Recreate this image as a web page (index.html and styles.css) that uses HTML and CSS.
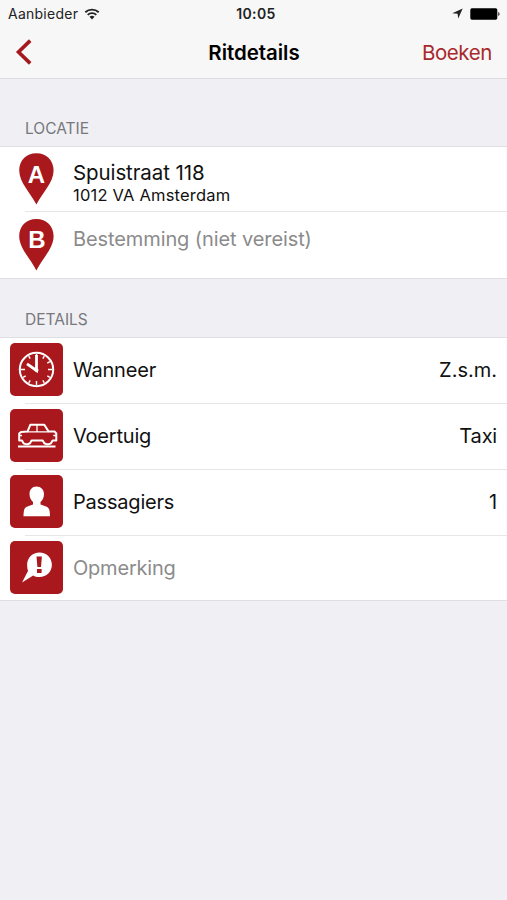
FILE: index.html
```html
<!DOCTYPE html>
<html lang="nl">
<head>
<meta charset="utf-8">
<title>Ritdetails</title>
<link rel="stylesheet" href="styles.css">
</head>
<body>
<header class="top">
  <div class="status">
    <div class="carrier"><span>Aanbieder</span>
      <svg class="wifi" width="16" height="12" viewBox="0 0 16 12"><path d="M1.3 4.3a9.6 9.6 0 0 1 13.4 0M3.7 6.9a6.2 6.2 0 0 1 8.6 0" fill="none" stroke="#222" stroke-width="1.9"/><path d="M5.5 8.8a3.7 3.7 0 0 1 5 0L8 11.4z" fill="#222"/></svg>
    </div>
    <time class="clock">10:05</time>
    <div class="indicators">
      <svg width="11" height="11" viewBox="0 0 11 11"><path d="M10.700.5 6.200 10.500 5.600 5.700.3 5.200z" fill="#222"/></svg>
      <svg width="30" height="12" viewBox="0 0 30 12"><rect x=".3" y=".3" width="27" height="11.4" rx="1.6" fill="#000"/><path d="M28.2 4v4q1.4-.5 1.4-2t-1.4-2z" fill="#333"/></svg>
    </div>
  </div>
  <nav class="nav">
    <svg class="back" width="18" height="26" viewBox="0 0 18 26"><path d="M15.2 1.600 3.500 13l11.700 11.400" fill="none" stroke="#a3191d" stroke-width="3.6"/></svg>
    <h1>Ritdetails</h1>
    <a class="book">Boeken</a>
  </nav>
</header>
<main>
  <h2 class="first">LOCATIE</h2>
  <section class="list">
    <div class="row origin">
      <svg class="pin" width="36" height="53" viewBox="-.4 .4 36 53"><path d="M18 .7C8 .7.8 8 .8 17.6.8 30 12 40 18 52 24 40 35.200 30 35.200 17.600 35.200 8 28 .7 18 .7z" fill="#a9181c"/><text x="18" y="30" text-anchor="middle">A</text></svg>
      <div class="address"><span class="street">Spuistraat 118</span><span class="city">1012 VA Amsterdam</span></div>
    </div>
    <div class="row destination">
      <svg class="pin" width="36" height="53" viewBox="-.4 -.4 36 53"><path d="M18 .7C8 .7.8 8 .8 17.6.8 30 12 40 18 52 24 40 35.200 30 35.200 17.600 35.200 8 28 .7 18 .7z" fill="#a9181c"/><text x="18.500" y="29.500" text-anchor="middle">B</text></svg>
      <span class="label muted dest">Bestemming (niet vereist)</span>
    </div>
  </section>
  <h2>DETAILS</h2>
  <section class="list">
    <div class="row when">
      <svg class="tile" width="53" height="53" viewBox="0 0 53 53"><rect width="53" height="53" rx="5" fill="#a9181c"/><g fill="none" stroke="#fff"><circle cx="26.500" cy="26.500" r="16.700" stroke-width="2"/><path d="M26.500 11v4M26.500 38v4M11 26.500h4M38 26.500h4M18.700 13.100l1.500 2.600M32.800 37.300l1.500 2.600M13.100 34.300l2.600-1.500M37.300 20.200l2.600-1.500M34.300 13.100l-1.500 2.600M20.200 37.300l-1.500 2.600M39.900 34.300l-2.600-1.500" stroke-width="1.400"/><path d="M26.500 12v15.500L17 20.800" stroke-width="2.800"/></g><circle cx="26.500" cy="27" r="2" fill="#fff"/></svg>
      <span class="label">Wanneer</span><span class="value zsm">Z.s.m.</span>
    </div>
    <div class="row">
      <svg class="tile" width="53" height="53" viewBox="0 0 53 53"><rect width="53" height="53" rx="5" fill="#a9181c"/><g fill="none" stroke="#fff" stroke-linejoin="round"><path d="M9.200 24.500 11 23 17.600 22.400 20.300 15.800H34.300L38.500 22.400H44.500L46.300 24.500V31.500H42.600L41 34.300 39 35.200H36.500L34.300 34.300 32.700 31.500H21.500L20 34.300 17.800 35.200H15.500L13.500 34.300 12 31.500H9.200z" stroke-width="2"/><path d="M17.600 22.900H38.500M27 15.800V22.900" stroke-width="1.300"/><path d="M9 26.500H12M43.300 26.500H46" stroke-width="1.400"/><path d="M8 37.500H45.500" stroke-width="1.800"/></g></svg>
      <span class="label">Voertuig</span><span class="value">Taxi</span>
    </div>
    <div class="row">
      <svg class="tile" width="53" height="53" viewBox="0 0 53 53"><rect width="53" height="53" rx="5" fill="#a9181c"/><path d="M26.500 11.500c-4.500 0-7 3.200-7 7.600 0 3.700 1.500 6.300 3.500 8v2.300c-3.700 1.700-8 1.900-8.800 5.300-.5 2-.7 4-.7 6.500H40c0-2.500-.2-4.500-.7-6.500-.8-3.400-5.100-3.600-8.800-5.300v-2.300c2-1.700 3.500-4.300 3.500-8 0-4.400-3-7.600-7.500-7.600z" fill="#fff"/></svg>
      <span class="label">Passagiers</span><span class="value">1</span>
    </div>
    <div class="row">
      <svg class="tile" width="53" height="53" viewBox="0 0 53 53"><rect width="53" height="53" rx="5" fill="#a9181c"/><path d="M29.500 11.500c7 0 12.400 5.400 12.400 12.300s-5.400 12.300-12.400 12.300c-2.600 0-4.700-.5-6.300-1.500L12 41.500l6-11.600c-.6-1.900-.9-3.800-.9-6.100 0-6.900 5.400-12.300 12.400-12.300z" fill="#fff"/><path d="M26.500 15.500h5.400l-.9 10.400h-3.600zM27 28h4.600v4H27z" fill="#a9181c"/></svg>
      <span class="label muted">Opmerking</span>
    </div>
  </section>
</main>
</body>
</html>
```
FILE: styles.css
```css
* { box-sizing: border-box; }
body {
  margin: 0;
  min-height: 900px;
  background: #efeff4;
  color: #111;
  font-family: Inter, "Liberation Sans", sans-serif;
}
svg { display: block; flex: none; }
.top {
  height: 79px;
  background: #f7f7f7;
  border-bottom: 1px solid #dcdcdf;
}
.status, .nav {
  display: grid;
  grid-template-columns: 1fr auto 1fr;
  align-items: center;
}
.status {
  height: 27px;
  padding: 0 7px 0 8px;
  font-size: 14px;
  color: #222;
}
.carrier { display: flex; align-items: center; gap: 6px; letter-spacing: 0.25px; }
.clock { font-weight: 600; letter-spacing: 0.4px; padding-left: 4px; }
.indicators { display: flex; justify-content: flex-end; align-items: center; gap: 7px; }
.nav { height: 50px; padding: 0 15px; }
h1 { margin: 0; padding-left: 1px; font-size: 20.5px; font-weight: 600; letter-spacing: -0.05px; color: #000; }
.book { justify-self: end; font-size: 20.5px; letter-spacing: -0.4px; color: #a8292d; }
h2 {
  margin: 0;
  height: 58px;
  padding: 31px 0 0 25px;
  font-size: 15.5px;
  line-height: 20px;
  font-weight: 400;
  letter-spacing: 0;
  color: #77777c;
}
h2.first { height: 67px; padding-top: 40px; }
.list {
  background: #fff;
  border-top: 1px solid #dfdfe3;
  border-bottom: 1px solid #dfdfe3;
}
.row {
  display: flex;
  height: 66px;
  align-items: center;
  padding: 0 10px 1px;
}
.list .row:last-child { height: 65px; padding-bottom: 0; }
.list .origin { height: 64px; padding-bottom: 0; }
.list .destination:last-child { height: 67px; }
.list .when { height: 65px; padding-bottom: 2px; }
.row + .row { background: linear-gradient(#e6e6e8, #e6e6e8) 25px 0 / 100% 1px no-repeat; }
.tile { margin: 0 9.7px 0 0.3px; }
.pin { margin: 0 18.6px 0 8.4px; }
.pin text { font: 700 24px "Liberation Sans", sans-serif; fill: #fff; }
.address { display: flex; flex-direction: column; padding-top: 9px; }
.street { font-size: 20.5px; line-height: 24px; letter-spacing: -0.1px; }
.city { font-size: 16.5px; line-height: 21px; letter-spacing: 0.2px; }
.label, .value { font-size: 20px; letter-spacing: -0.2px; }
.value { margin-left: auto; }
.zsm { letter-spacing: 0; }
.muted { color: #8b8b8b; }
.dest { padding-bottom: 11px; letter-spacing: -0.1px; }
```
